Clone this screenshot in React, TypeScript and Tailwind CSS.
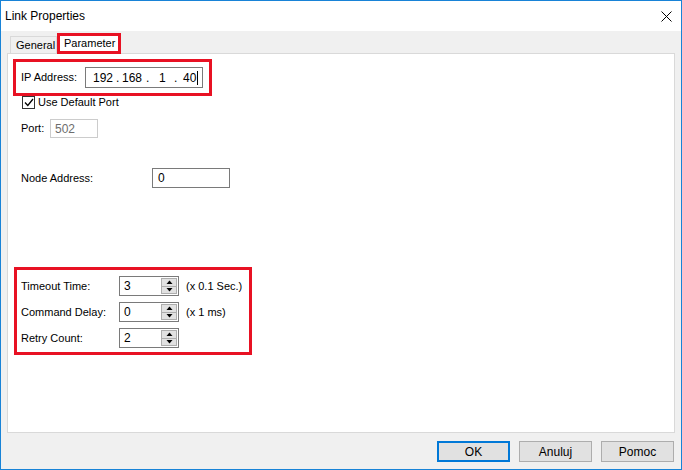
const ui = { fontFamily: '"Liberation Sans", Arial, sans-serif' }

function Spin({ value }: { value: string }) {
  return (
    <div className="flex h-[20px] w-[60px] border border-[#7a7a7a] bg-white">
      <div className="flex flex-1 items-center pl-[4px] text-[12px] text-black">{value}</div>
      <div className="my-[1px] mr-[1px] flex w-[16px] flex-col border border-[#adadad] bg-[#e1e1e1]">
        <div className="flex flex-1 items-center justify-center border-b border-[#adadad]">
          <svg width="7" height="4" viewBox="0 0 7 4">
            <path d="M0.5 4 L3.5 0.5 L6.5 4 Z" fill="#000" />
          </svg>
        </div>
        <div className="flex flex-1 items-center justify-center">
          <svg width="7" height="4" viewBox="0 0 7 4">
            <path d="M0.5 0 L3.5 3.5 L6.5 0 Z" fill="#000" />
          </svg>
        </div>
      </div>
    </div>
  )
}

function Btn({ label, primary }: { label: string; primary?: boolean }) {
  return (
    <div
      className={
        primary
          ? 'flex h-[21px] w-[73px] items-center justify-center border-2 border-[#0078d7] bg-[#e1e1e1] text-[12px] text-black'
          : 'flex h-[21px] w-[73px] items-center justify-center border border-[#adadad] bg-[#e1e1e1] text-[12px] text-black'
      }
    >
      {label}
    </div>
  )
}

export default function App() {
  return (
    <div className="flex h-[470px] w-[682px] flex-col border border-[#1883d7] bg-[#f0f0f0] text-[11px] text-black" style={ui}>
      <div className="flex h-[30px] items-center justify-between bg-white pl-[4px] pr-[9px]">
        <span className="text-[12px]">Link Properties</span>
        <svg width="11" height="11" viewBox="0 0 11 11">
          <path d="M0.5 0.5 L10.5 10.5 M10.5 0.5 L0.5 10.5" stroke="#000" strokeWidth="1" />
        </svg>
      </div>

      <div className="flex flex-1 flex-col px-[6px] pt-[1px]">
        <div className="flex h-[21px] items-end pl-[3px]">
          <div className="mb-[-1px] flex h-[18px] w-[47px] items-center border border-b-0 border-[#d9d9d9] bg-[#f0f0f0] pl-[5px]">
            General
          </div>
          <div className="relative z-10 mb-[-1px] flex h-[21px] w-[64px] items-center border-[3px] border-[#e81123] bg-white pl-[4px]">
            Parameter
          </div>
        </div>

        <div className="flex h-[380px] flex-col border border-[#d9d9d9] bg-white pl-[5px] pt-[5px]">
          <div className="flex h-[37px] w-[199px] items-center border-[3px] border-[#e81123] pl-[5px]">
            <span className="w-[64px]">IP Address:</span>
            <div className="flex h-[21px] w-[118px] items-center border border-[#7a7a7a] pl-[7px] text-[12px]">
              <span className="w-[23px]">192</span>
              <span className="w-[6px]">.</span>
              <span className="w-[24px]">168</span>
              <span className="w-[13px]">.</span>
              <span className="w-[15px]">1</span>
              <span className="w-[9px]">.</span>
              <span>40</span>
              <span className="ml-[1px] h-[14px] w-[1px] bg-black" />
            </div>
          </div>

          <div className="flex h-[13px] items-center pl-[9px]">
            <div className="flex h-[13px] w-[13px] items-center justify-center border border-[#333] bg-white">
              <svg width="10" height="9" viewBox="0 0 10 9">
                <path d="M1 4.5 L3.8 7.5 L9 1" fill="none" stroke="#000" strokeWidth="1.3" />
              </svg>
            </div>
            <span className="ml-[3px]">Use Default Port</span>
          </div>

          <div className="mt-[10px] flex h-[19px] items-center pl-[8px]">
            <span className="w-[29px]">Port:</span>
            <div className="flex h-[19px] w-[48px] items-center border border-[#cccccc] pl-[4px] text-[12px] text-[#6d6d6d]">
              502
            </div>
          </div>

          <div className="mt-[30px] flex h-[20px] items-center pl-[8px]">
            <span className="w-[131px]">Node Address:</span>
            <div className="flex h-[20px] w-[78px] items-center border border-[#7a7a7a] pl-[5px] text-[12px]">0</div>
          </div>

          <div className="ml-[1px] mt-[79px] flex h-[88px] w-[238px] flex-col gap-[6px] border-[3px] border-[#e81123] pl-[4px] pt-[6px]">
            <div className="flex items-center">
              <span className="w-[98px]">Timeout Time:</span>
              <Spin value="3" />
              <span className="ml-[7px]">(x 0.1 Sec.)</span>
            </div>
            <div className="flex items-center">
              <span className="w-[98px]">Command Delay:</span>
              <Spin value="0" />
              <span className="ml-[7px]">(x 1 ms)</span>
            </div>
            <div className="flex items-center">
              <span className="w-[98px]">Retry Count:</span>
              <Spin value="2" />
            </div>
          </div>
        </div>

        <div className="mt-[8px] flex justify-end gap-[9px] pr-[1px]">
          <Btn label="OK" primary />
          <Btn label="Anuluj" />
          <Btn label="Pomoc" />
        </div>
      </div>
    </div>
  )
}
